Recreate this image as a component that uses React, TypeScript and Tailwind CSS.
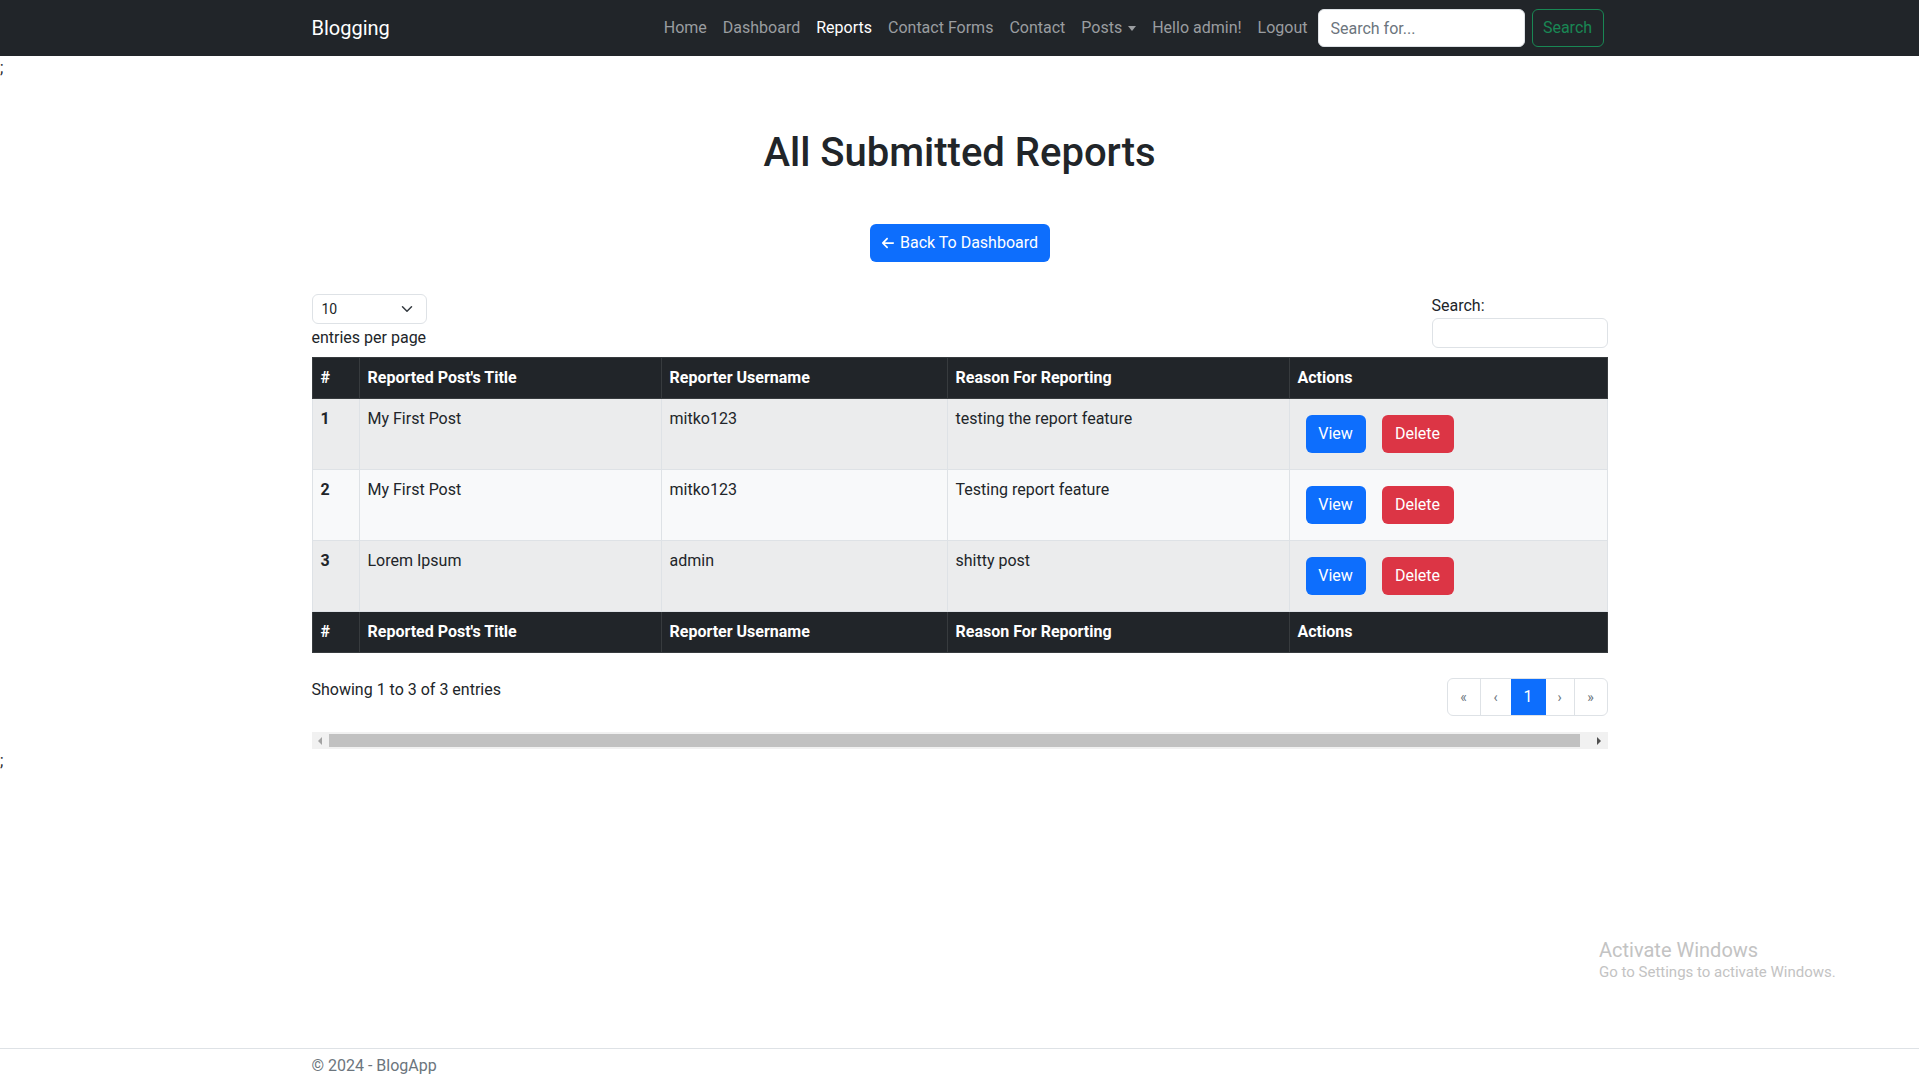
import React from "react";
import { FaArrowLeft } from "react-icons/fa6";

const rows = [
  { id: 1, title: "My First Post", user: "mitko123", reason: "testing the report feature" },
  { id: 2, title: "My First Post", user: "mitko123", reason: "Testing report feature" },
  { id: 3, title: "Lorem Ipsum", user: "admin", reason: "shitty post" },
];

function HeadRow() {
  return (
    <tr className="h-[41px] bg-[#212529] text-white">
      <th className="w-[47px] border border-[#373b3e] px-2 py-2 text-left font-bold">#</th>
      <th className="w-[302px] border border-[#373b3e] px-2 py-2 text-left font-bold">Reported Post's Title</th>
      <th className="w-[286px] border border-[#373b3e] px-2 py-2 text-left font-bold">Reporter Username</th>
      <th className="w-[342px] border border-[#373b3e] px-2 py-2 text-left font-bold">Reason For Reporting</th>
      <th className="border border-[#373b3e] px-2 py-2 text-left font-bold">Actions</th>
    </tr>
  );
}

export default function App() {
  const links = ["Home", "Dashboard", "Reports", "Contact Forms", "Contact"];
  return (
    <div className="relative flex min-h-screen flex-col bg-white font-['Roboto',sans-serif] text-[16px] leading-6 text-[#212529]">
      <nav className="h-14 shrink-0 bg-[#212529]">
        <div className="mx-auto flex h-full w-[1296px] items-center">
          <span className="text-[20px] leading-[30px] text-white">Blogging</span>
          <ul className="ml-auto flex items-center">
            {links.map((l) => (
              <li key={l} className={`px-2 py-2 ${l === "Reports" ? "text-white" : "text-[#9a9da0]"}`}>
                {l}
              </li>
            ))}
            <li className="flex items-center px-2 py-2 text-[#9a9da0]">
              Posts
              <span className="ml-[6px] inline-block h-0 w-0 border-x-[4px] border-t-[5px] border-x-transparent border-t-[#9a9da0]" />
            </li>
            <li className="px-2 py-2 text-[#9a9da0]">Hello admin!</li>
            <li className="px-2 py-2 text-[#9a9da0]">Logout</li>
          </ul>
          <form className="ml-[2px] mr-[4px] flex">
            <input
              placeholder="Search for..."
              className="h-[38px] w-[207px] rounded-[6px] border border-[#dee2e6] bg-white px-3 text-[16px] text-[#212529] outline-none placeholder:text-[#6c757d]"
            />
            <button type="button" className="ml-[7px] h-[38px] w-[72px] rounded-[6px] border border-[#198754] text-[16px] text-[#198754]">
              Search
            </button>
          </form>
        </div>
      </nav>

      <div className="h-6 leading-6">;</div>

      <main className="mx-auto w-[1296px]">
        <h1 className="mt-[49px] text-center text-[40px] font-medium leading-[48px] text-[#212529]">All Submitted Reports</h1>
        <div className="mt-[47px] flex justify-center">
          <button type="button" className="flex h-[38px] w-[180px] items-center justify-center gap-[5px] rounded-[6px] bg-[#0d6efd] text-[16px] text-white">
            <FaArrowLeft className="h-[14px] w-[14px]" />
            Back To Dashboard
          </button>
        </div>

        <div className="mt-[32px] flex items-start justify-between">
          <div>
            <div className="relative flex h-[30px] w-[115px] items-center rounded-[6px] border border-[#dee2e6] pl-[9px] text-[14px]">
              10
              <svg className="absolute right-[11px] top-[8px]" width="16" height="12" viewBox="0 0 16 16">
                <path d="m2 5 6 6 6-6" fill="none" stroke="#343a40" strokeWidth="2" strokeLinecap="round" strokeLinejoin="round" />
              </svg>
            </div>
            <div className="mt-[2px]">entries per page</div>
          </div>
          <div className="w-[176px]">
            <div>Search:</div>
            <div className="h-[30px] w-full rounded-[6px] border border-[#dee2e6]" />
          </div>
        </div>

        <table className="mt-[7px] w-full table-fixed border-collapse">
          <thead>
            <HeadRow />
          </thead>
          <tbody>
            {rows.map((r, i) => (
              <tr key={r.id} className={`h-[71px] align-top ${i % 2 === 0 ? "bg-[#ebeced]" : "bg-[#f8f9fa]"}`}>
                <td className="border border-[#dee2e6] px-2 py-2 font-bold">{r.id}</td>
                <td className="border border-[#dee2e6] px-2 py-2">{r.title}</td>
                <td className="border border-[#dee2e6] px-2 py-2">{r.user}</td>
                <td className="border border-[#dee2e6] px-2 py-2">{r.reason}</td>
                <td className="border border-[#dee2e6] px-2 py-2">
                  <div className="flex">
                    <button type="button" className="m-2 h-[38px] w-[60px] rounded-[6px] bg-[#0d6efd] text-white">View</button>
                    <button type="button" className="m-2 h-[38px] w-[72px] rounded-[6px] bg-[#dc3545] text-white">Delete</button>
                  </div>
                </td>
              </tr>
            ))}
          </tbody>
          <tfoot>
            <HeadRow />
          </tfoot>
        </table>

        <div className="mt-[25px] flex items-start justify-between">
          <div>Showing 1 to 3 of 3 entries</div>
          <div className="flex h-[38px] overflow-hidden rounded-[6px] border border-[#dee2e6] text-[14px] text-[#6c757d]">
            <div className="flex w-[33px] items-center justify-center border-r border-[#dee2e6]">«</div>
            <div className="flex w-[30px] items-center justify-center">‹</div>
            <div className="flex w-[35px] items-center justify-center bg-[#0d6efd] text-[16px] text-white">1</div>
            <div className="flex w-[29px] items-center justify-center border-r border-[#dee2e6]">›</div>
            <div className="flex w-[32px] items-center justify-center">»</div>
          </div>
        </div>

        <div className="mt-[16px] flex h-[17px] items-center bg-[#f1f1f1]">
          <div className="flex h-full w-[17px] items-center justify-center">
            <span className="h-0 w-0 border-y-[4px] border-r-[4px] border-y-transparent border-r-[#a3a3a3]" />
          </div>
          <div className="mr-[11px] h-[13px] flex-1 bg-[#c1c1c1]" />
          <div className="flex h-full w-[17px] items-center justify-center">
            <span className="h-0 w-0 border-y-[4px] border-l-[4px] border-y-transparent border-l-[#505050]" />
          </div>
        </div>
      </main>

      <div className="h-6 leading-6">;</div>

      <div className="flex-1" />

      <footer className="h-[31px] shrink-0 border-t border-[#dee2e6] pt-[5px]">
        <div className="mx-auto w-[1296px] leading-6 text-[#6c757d]">© 2024 - BlogApp</div>
      </footer>

      <div className="pointer-events-none absolute left-[1599px] top-[938px] text-[#c3c3c3]">
        <div className="text-[20px] leading-6">Activate Windows</div>
        <div className="text-[15px] leading-5">Go to Settings to activate Windows.</div>
      </div>
    </div>
  );
}
